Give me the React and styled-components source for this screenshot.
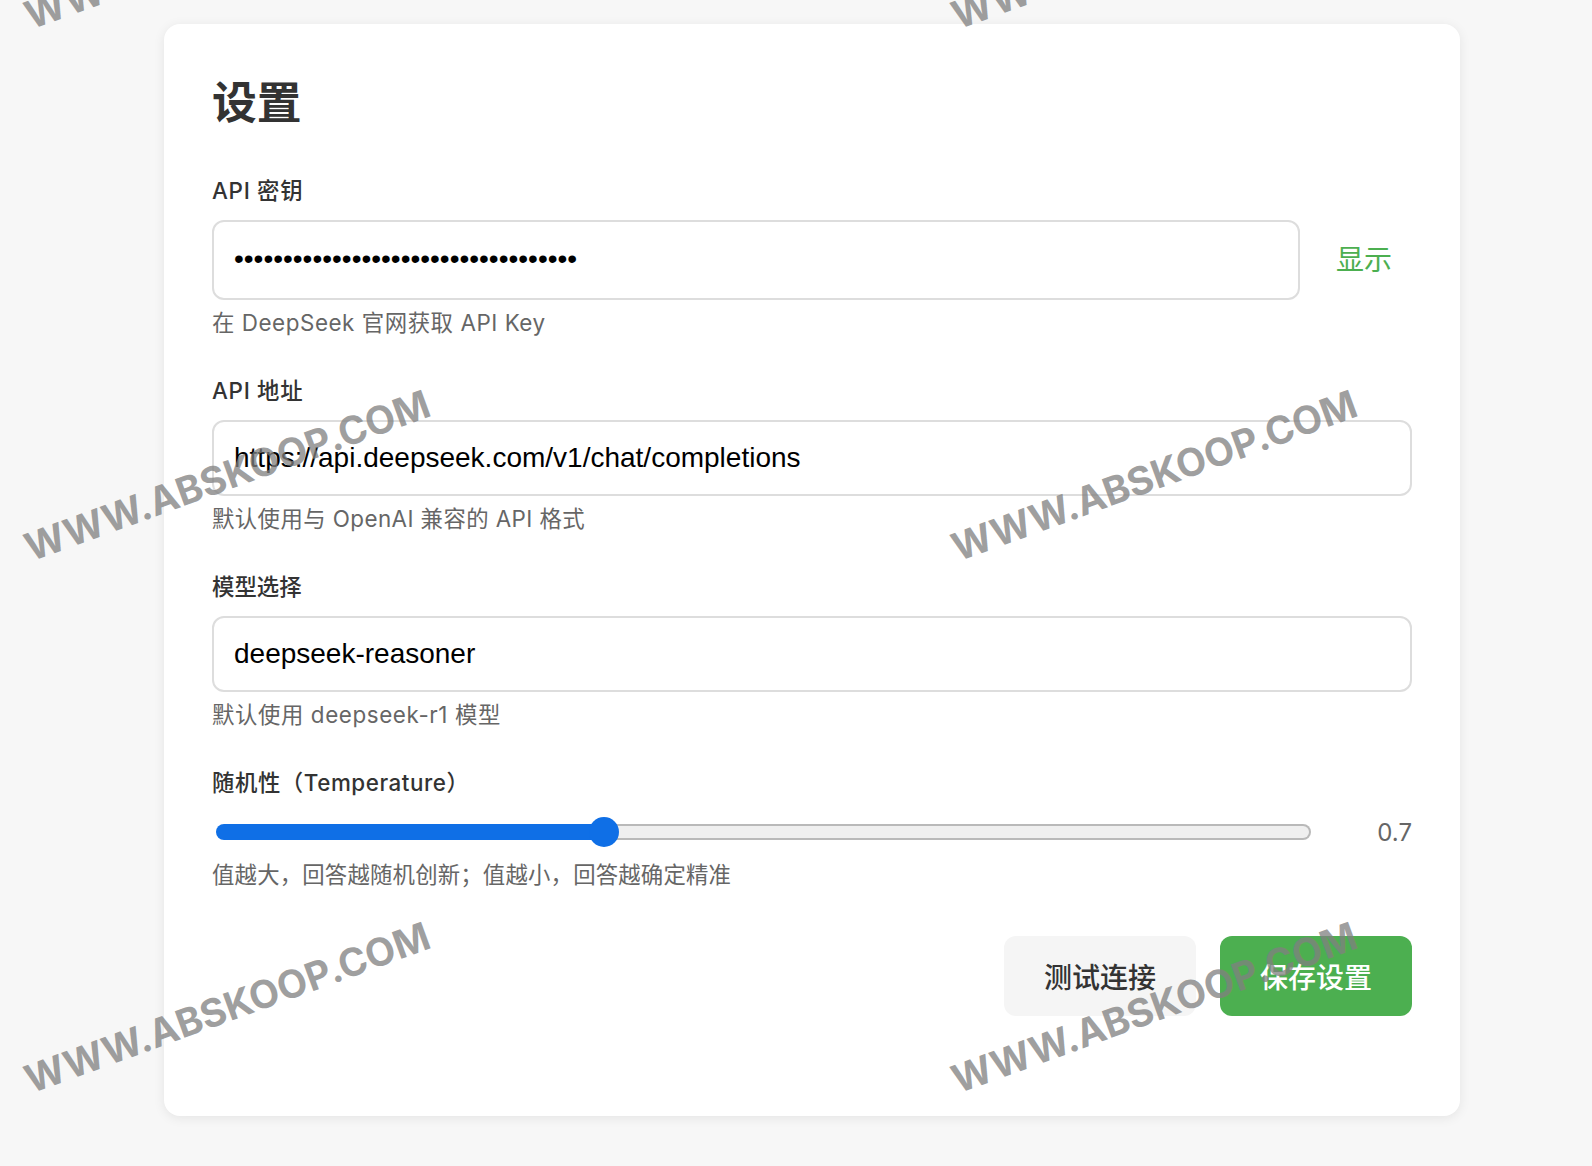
import React from "react";
import styled, { createGlobalStyle } from "styled-components";

const FONT = `"Liberation Sans", "Noto Sans CJK SC", sans-serif`;
const UI_FONT = `Inter, "Noto Sans CJK SC", sans-serif`;

const GlobalStyle = createGlobalStyle`
  html, body {
    margin: 0;
    padding: 0;
    height: 100%;
    overflow: hidden;
    background: #f7f7f7;
  }
  * {
    box-sizing: border-box;
  }
`;

const Page = styled.div`
  position: relative;
  height: 1166px;
  overflow: hidden;
  padding: 24px 0 0 164px;
  font-family: ${UI_FONT};
`;

const Card = styled.div`
  width: 1296px;
  height: 1092px;
  padding: 48px;
  background: #fff;
  border-radius: 16px;
  box-shadow: 0 2px 12px rgba(0, 0, 0, 0.08);
`;

const Title = styled.h1`
  margin: 1px 0 42px;
  font-size: 44.8px;
  line-height: 60px;
  font-weight: 700;
  color: #333;
`;

const Group = styled.div`
  margin-bottom: 36px;
`;

const Label = styled.label`
  display: block;
  margin-bottom: 13px;
  font-size: 22.4px;
  line-height: 32px;
  font-weight: 500;
  letter-spacing: ${(p) => p.$track || 0}px;
  color: #333;
`;

const Row = styled.div`
  display: flex;
  align-items: center;
  gap: 36px;
`;

const Input = styled.input`
  display: block;
  width: 100%;
  flex: 1;
  min-width: 0;
  height: ${(p) => p.$height}px;
  padding: 0 20px ${(p) => p.$lift || 0}px;
  border: 2px solid #ddd;
  border-radius: 12px;
  outline: none;
  background: #fff;
  font-family: ${FONT};
  font-size: 28px;
  color: #000;
`;

const Toggle = styled.button`
  width: 56px;
  margin-right: 20px;
  padding: 0;
  border: none;
  background: none;
  font-family: ${UI_FONT};
  font-size: 28px;
  line-height: 36px;
  white-space: nowrap;
  color: #4caf50;
`;

const Hint = styled.div`
  margin-top: 7px;
  font-size: 22.4px;
  line-height: 32px;
  letter-spacing: ${(p) => p.$track || 0}px;
  color: #666;
`;

const SliderRow = styled.div`
  display: flex;
  align-items: center;
  height: 40px;
`;

const Slider = styled.input`
  flex: 1;
  height: 30px;
  margin: 0 0 0 4px;
  padding: 0;
  background: transparent;
  appearance: none;
  -webkit-appearance: none;

  &::-webkit-slider-runnable-track {
    height: 16px;
    border: 2px solid transparent;
    border-radius: 8px;
    background:
      linear-gradient(#0f6fe6, #0f6fe6) left / ${(p) => p.$fill}% 100% no-repeat border-box,
      linear-gradient(#efefef, #efefef) padding-box,
      linear-gradient(#b9b9b9, #b9b9b9) border-box;
  }

  &::-webkit-slider-thumb {
    -webkit-appearance: none;
    width: 30px;
    height: 30px;
    margin-top: -9px;
    border: none;
    border-radius: 50%;
    background: #0f6fe6;
  }
`;

const SliderValue = styled.span`
  width: 101px;
  text-align: right;
  font-size: 24px;
  color: #666;
`;

const Actions = styled.div`
  display: flex;
  justify-content: flex-end;
  gap: 24px;
  margin-top: 45px;
`;

const Button = styled.button`
  width: 192px;
  height: 80px;
  padding: 0;
  border: none;
  border-radius: 12px;
  background: ${(p) => (p.$primary ? "#4caf50" : "#f5f5f5")};
  font-family: ${UI_FONT};
  font-size: 28px;
  font-weight: 500;
  color: ${(p) => (p.$primary ? "#fff" : "#333")};
`;

const WatermarkLayer = styled.div`
  position: absolute;
  inset: 0;
  pointer-events: none;
`;

const Watermark = styled.span`
  position: absolute;
  left: ${(p) => p.$x}px;
  top: ${(p) => p.$y}px;
  transform: translate(-50%, -50%) rotate(-20deg);
  font-family: Inter, sans-serif;
  font-size: 38.8px;
  font-weight: 700;
  white-space: nowrap;
  color: rgba(128, 128, 128, 0.75);
`;

const marks = [
  [227, -57],
  [1154, -57],
  [227, 475],
  [1154, 475],
  [227, 1007],
  [1154, 1007],
];

export default function App() {
  const temperature = 0.7;
  const fill = 35;

  return (
    <Page>
      <GlobalStyle />
      <Card>
        <Title>设置</Title>

        <Group>
          <Label $track={0.7}>API 密钥</Label>
          <Row>
            <Input
              $height={80}
              $lift={3}
              type="password"
              readOnly
              value="sk-00000000000000000000000000000000"
            />
            <Toggle>显示</Toggle>
          </Row>
          <Hint $track={0.55}>在 DeepSeek 官网获取 API Key</Hint>
        </Group>

        <Group>
          <Label $track={0.7}>API 地址</Label>
          <Input
            $height={76}
            readOnly
            value="https://api.deepseek.com/v1/chat/completions"
          />
          <Hint $track={0.42}>默认使用与 OpenAI 兼容的 API 格式</Hint>
        </Group>

        <Group>
          <Label>模型选择</Label>
          <Input $height={76} readOnly value="deepseek-reasoner" />
          <Hint $track={0.6}>默认使用 deepseek-r1 模型</Hint>
        </Group>

        <Group>
          <Label $track={0.55}>随机性（Temperature）</Label>
          <SliderRow>
            <Slider
              type="range"
              min="0"
              max="2"
              step="0.1"
              readOnly
              value={temperature}
              $fill={fill}
            />
            <SliderValue>{temperature}</SliderValue>
          </SliderRow>
          <Hint $track={0.18}>值越大，回答越随机创新；值越小，回答越确定精准</Hint>
        </Group>

        <Actions>
          <Button>测试连接</Button>
          <Button $primary>保存设置</Button>
        </Actions>
      </Card>

      <WatermarkLayer>
        {marks.map(([x, y]) => (
          <Watermark key={`${x}-${y}`} $x={x} $y={y}>
            WWW.ABSKOOP.COM
          </Watermark>
        ))}
      </WatermarkLayer>
    </Page>
  );
}
